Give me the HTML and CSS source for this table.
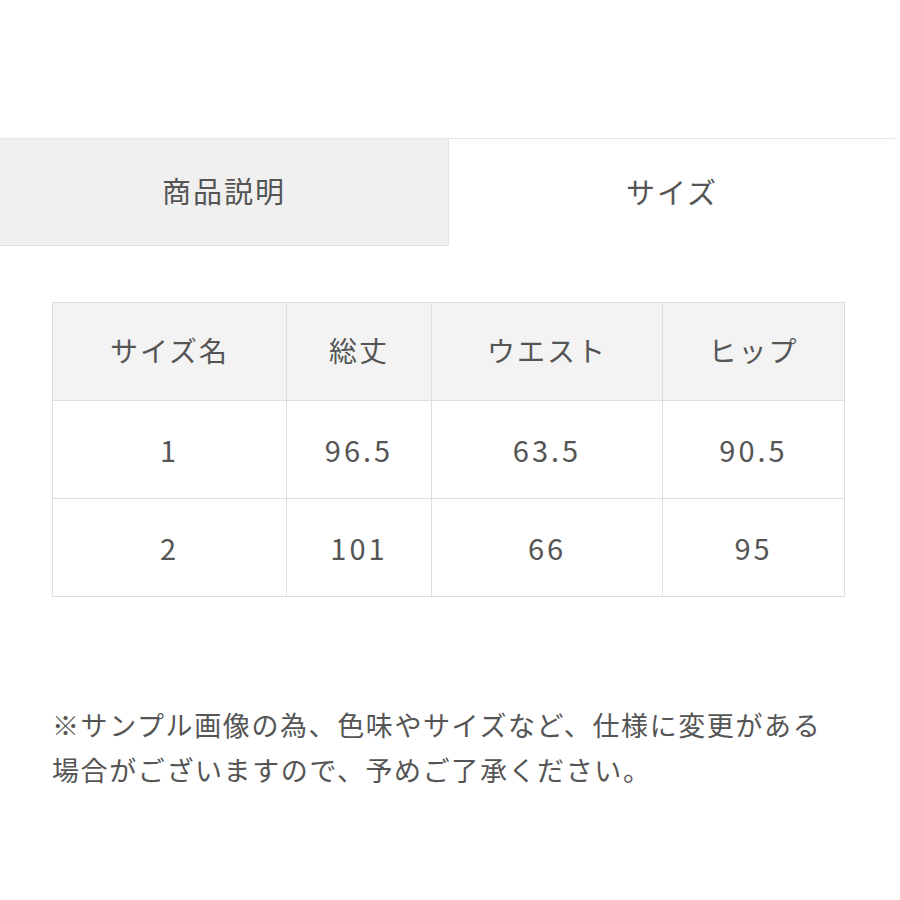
FILE: index.html
```html
<!DOCTYPE html>
<html lang="ja">
<head>
<meta charset="utf-8">
<title>サイズ</title>
<link rel="stylesheet" href="styles.css">
</head>
<body>
<div class="page">
  <div class="tabs">
    <div class="tab tab-inactive">商品説明</div>
    <div class="tab tab-active">サイズ</div>
  </div>
  <table class="size-table">
    <colgroup>
      <col class="c1"><col class="c2"><col class="c3"><col class="c4">
    </colgroup>
    <thead>
      <tr><th>サイズ名</th><th>総丈</th><th>ウエスト</th><th>ヒップ</th></tr>
    </thead>
    <tbody>
      <tr><td>1</td><td>96.5</td><td>63.5</td><td>90.5</td></tr>
      <tr><td>2</td><td>101</td><td>66</td><td>95</td></tr>
    </tbody>
  </table>
  <p class="note">※サンプル画像の為、色味やサイズなど、仕様に変更がある<br>場合がございますので、予めご了承ください。</p>
</div>
</body>
</html>
```
FILE: styles.css
```css
html, body {
  margin: 0;
  padding: 0;
  background: #ffffff;
}
body {
  font-family: "Noto Sans CJK JP", "Noto Sans", sans-serif;
  color: #555555;
}
.page {
  padding-top: 138px;
}
.tabs {
  display: flex;
  width: 895px;
  height: 107px;
  border-top: 1px solid #e6e6e6;
}
.tab {
  display: flex;
  align-items: center;
  justify-content: center;
  font-size: 29px;
  letter-spacing: 2px;
  padding-bottom: 4px;
  box-sizing: border-box;
}
.tab-inactive {
  width: 449px;
  background: #f0f0f0;
  border-right: 1px solid #e4e4e4;
  border-bottom: 1px solid #e2e2e2;
}
.tab-active {
  flex: 1;
  background: #ffffff;
}
.size-table {
  margin: 56px 0 0 52px;
  width: 792px;
  border-collapse: collapse;
  table-layout: fixed;
}
.c1 { width: 234px; }
.c2 { width: 145px; }
.c3 { width: 231px; }
.c4 { width: 182px; }
.size-table th,
.size-table td {
  border: 1px solid #dedede;
  padding: 0;
  text-align: center;
  vertical-align: middle;
  font-weight: normal;
  color: #555555;
}
.size-table th {
  height: 93px;
  background: #f3f3f3;
  font-size: 28px;
  letter-spacing: 2px;
  padding-bottom: 4px;
}
.size-table td {
  height: 95px;
  font-size: 29px;
  letter-spacing: 3px;
  padding-bottom: 2px;
}
.note {
  margin: 105px 0 0 52px;
  font-size: 27px;
  line-height: 45px;
  letter-spacing: 1.6px;
  color: #555555;
}
```
